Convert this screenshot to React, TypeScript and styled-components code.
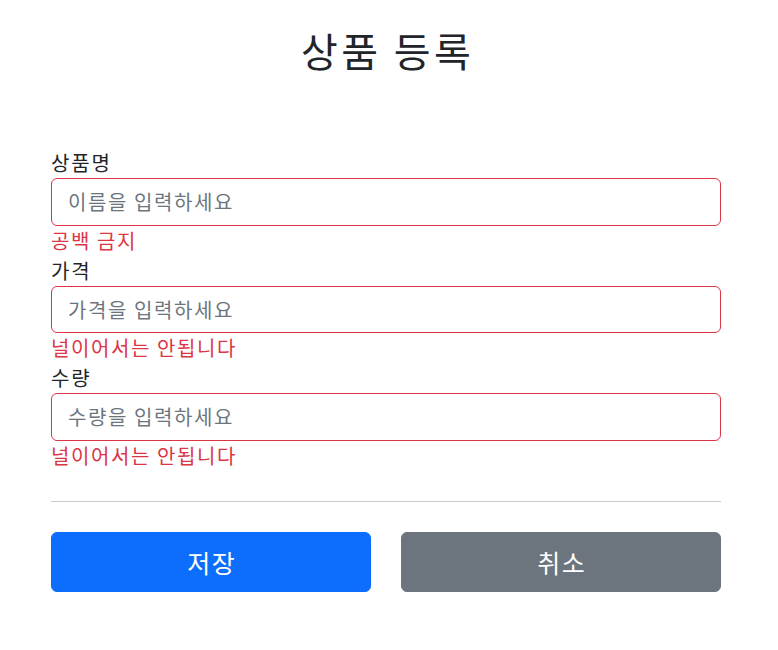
import React from "react";
import styled, { createGlobalStyle } from "styled-components";

const GlobalStyle = createGlobalStyle`
  * { box-sizing: border-box; }
  body {
    margin: 0;
    background: #fff;
    color: #212529;
    font-family: "Noto Sans CJK KR", "Noto Sans", sans-serif;
    font-size: 20px;
    line-height: 1.5;
  }
`;

const fields = [
  { label: "상품명", placeholder: "이름을 입력하세요", error: "공백 금지" },
  { label: "가격", placeholder: "가격을 입력하세요", error: "널이어서는 안됩니다" },
  { label: "수량", placeholder: "수량을 입력하세요", error: "널이어서는 안됩니다" },
];

export default function App() {
  return (
    <>
      <GlobalStyle />
      <Container>
        <Header>
          <Title>상품 등록</Title>
        </Header>
        <Form onSubmit={(e) => e.preventDefault()}>
          {fields.map((f) => (
            <Field key={f.label}>
              <Label>{f.label}</Label>
              <Input type="text" placeholder={f.placeholder} />
              <FieldError>{f.error}</FieldError>
            </Field>
          ))}
          <Divider />
          <ButtonRow>
            <Button type="submit" $variant="primary">
              저장
            </Button>
            <Button type="button" $variant="secondary">
              취소
            </Button>
          </ButtonRow>
        </Form>
      </Container>
    </>
  );
}

const Container = styled.div`
  width: 670px;
  margin-left: 51px;
`;
const Header = styled.div`
  padding: 26px 0 74px;
  text-align: center;
`;
const Title = styled.h2`
  margin: 0;
  font-size: 40px;
  font-weight: 400;
  line-height: 1.2;
  letter-spacing: 0.085em;
  padding-left: 0.085em;
`;
const Form = styled.form`
  display: flex;
  flex-direction: column;
`;
const Field = styled.div`
  display: flex;
  flex-direction: column;
`;
const Label = styled.label`
  display: block;
  letter-spacing: 0.09em;
`;
const Input = styled.input`
  display: block;
  width: 100%;
  height: 47.5px;
  padding: 0 16px;
  font-family: inherit;
  font-size: 20px;
  letter-spacing: 0.08em;
  color: #212529;
  border: 1px solid #dc3545;
  border-radius: 6px;
  outline: none;
  &::placeholder {
    color: #6c757d;
  }
`;
const FieldError = styled.div`
  color: #dc3545;
  letter-spacing: 0.08em;
`;
const Divider = styled.hr`
  margin: 30px 0;
  border: 0;
  border-top: 1px solid #c8cacc;
`;
const ButtonRow = styled.div`
  display: grid;
  grid-template-columns: 1fr 1fr;
  gap: 30px;
`;
const Button = styled.button<{ $variant: "primary" | "secondary" }>`
  height: 60px;
  border: 1px solid ${(p) => (p.$variant === "primary" ? "#0d6efd" : "#6c757d")};
  background: ${(p) => (p.$variant === "primary" ? "#0d6efd" : "#6c757d")};
  color: #fff;
  font-family: inherit;
  font-size: 25px;
  letter-spacing: 0.06em;
  text-indent: 0.06em;
  border-radius: 6px;
  cursor: pointer;
`;
